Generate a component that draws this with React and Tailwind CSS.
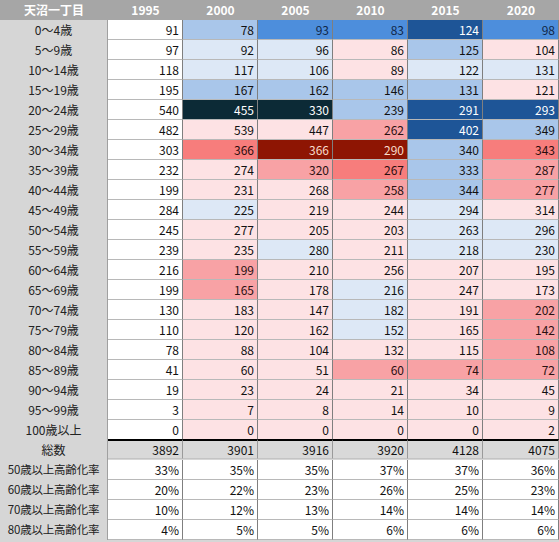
const FONT = { fontFamily: '"Noto Sans CJK JP", "Noto Sans", sans-serif' };

const SWATCH = {
  w: 'bg-white text-[#111]',
  vb: 'bg-[#dde8f6] text-[#111]',
  lb: 'bg-[#a9c6ea] text-[#111]',
  mb: 'bg-[#4d8edc] text-[#10284a]',
  db: 'bg-[#1e5597] text-white',
  nv: 'bg-[#0c2a36] text-white',
  vp: 'bg-[#fde2e4] text-[#111]',
  pk: 'bg-[#f8a2a5] text-[#2a1111]',
  sa: 'bg-[#f77d7c] text-[#2a0d0d]',
  dr: 'bg-[#8e1503] text-[#f9dccb]',
};

const years = ['1995', '2000', '2005', '2010', '2015', '2020'];

// [label, [value, swatch] x6]
const ages = [
  ['0～4歳', [[91, 'w'], [78, 'lb'], [93, 'mb'], [83, 'mb'], [124, 'db'], [98, 'mb']]],
  ['5～9歳', [[97, 'w'], [92, 'vb'], [96, 'vb'], [86, 'vp'], [125, 'lb'], [104, 'vp']]],
  ['10～14歳', [[118, 'w'], [117, 'vb'], [106, 'vb'], [89, 'vp'], [122, 'vb'], [131, 'vb']]],
  ['15～19歳', [[195, 'w'], [167, 'lb'], [162, 'lb'], [146, 'lb'], [131, 'lb'], [121, 'vp']]],
  ['20～24歳', [[540, 'w'], [455, 'nv'], [330, 'nv'], [239, 'lb'], [291, 'db'], [293, 'db']]],
  ['25～29歳', [[482, 'w'], [539, 'vp'], [447, 'vp'], [262, 'pk'], [402, 'db'], [349, 'lb']]],
  ['30～34歳', [[303, 'w'], [366, 'sa'], [366, 'dr'], [290, 'dr'], [340, 'lb'], [343, 'sa']]],
  ['35～39歳', [[232, 'w'], [274, 'vp'], [320, 'pk'], [267, 'sa'], [333, 'lb'], [287, 'pk']]],
  ['40～44歳', [[199, 'w'], [231, 'vp'], [268, 'vp'], [258, 'pk'], [344, 'lb'], [277, 'pk']]],
  ['45～49歳', [[284, 'w'], [225, 'vb'], [219, 'vp'], [244, 'vp'], [294, 'vb'], [314, 'vp']]],
  ['50～54歳', [[245, 'w'], [277, 'vp'], [205, 'vp'], [203, 'vp'], [263, 'vb'], [296, 'vb']]],
  ['55～59歳', [[239, 'w'], [235, 'vp'], [280, 'vb'], [211, 'vp'], [218, 'vb'], [230, 'vb']]],
  ['60～64歳', [[216, 'w'], [199, 'pk'], [210, 'vp'], [256, 'vp'], [207, 'vp'], [195, 'vp']]],
  ['65～69歳', [[199, 'w'], [165, 'pk'], [178, 'vp'], [216, 'vb'], [247, 'vp'], [173, 'vp']]],
  ['70～74歳', [[130, 'w'], [183, 'vp'], [147, 'vp'], [182, 'vb'], [191, 'vp'], [202, 'pk']]],
  ['75～79歳', [[110, 'w'], [120, 'vp'], [162, 'vp'], [152, 'vb'], [165, 'vp'], [142, 'pk']]],
  ['80～84歳', [[78, 'w'], [88, 'vp'], [104, 'vp'], [132, 'vp'], [115, 'vp'], [108, 'pk']]],
  ['85～89歳', [[41, 'w'], [60, 'vp'], [51, 'vp'], [60, 'pk'], [74, 'pk'], [72, 'pk']]],
  ['90～94歳', [[19, 'w'], [23, 'vp'], [24, 'vp'], [21, 'vp'], [34, 'vp'], [45, 'vp']]],
  ['95～99歳', [[3, 'w'], [7, 'vp'], [8, 'vp'], [14, 'vp'], [10, 'vp'], [9, 'vp']]],
  ['100歳以上', [[0, 'w'], [0, 'vp'], [0, 'vp'], [0, 'vp'], [0, 'vp'], [2, 'vp']]],
];

const totals = [3892, 3901, 3916, 3920, 4128, 4075];

const rates = [
  ['50歳以上高齢化率', ['33%', '35%', '35%', '37%', '37%', '36%']],
  ['60歳以上高齢化率', ['20%', '22%', '23%', '26%', '25%', '23%']],
  ['70歳以上高齢化率', ['10%', '12%', '13%', '14%', '14%', '14%']],
  ['80歳以上高齢化率', ['4%', '5%', '5%', '6%', '6%', '6%']],
];

const Label = ({ children, className = '' }) => (
  <div className={`h-[20px] bg-[#d6d6d6] text-[#222] flex items-center justify-center whitespace-nowrap border-r border-[#a0a0a0] ${className}`}>
    {children}
  </div>
);

const Cell = ({ children, className = '' }) => (
  <div className={`h-[20px] flex items-center justify-end pr-[3px] border-r border-b border-r-[#7f7f7f] border-b-[#b8b8b8] ${className}`}>
    {children}
  </div>
);

export default function App() {
  return (
    <div className="w-[559px] h-[542px] bg-[#d6d6d6] overflow-hidden" style={FONT}>
      <div className="grid grid-cols-[108px_75px_75px_75px_75px_75px_76px] text-[12px] leading-none">
        {/* header */}
        <div className="h-[20px] bg-[#a6a6a6] text-white font-bold flex items-center justify-center">天沼一丁目</div>
        {years.map((y) => (
          <div key={y} className="h-[20px] bg-[#a6a6a6] text-white font-bold flex items-center justify-center">
            {y}
          </div>
        ))}

        {/* age rows */}
        {ages.map(([label, cells]) => (
          <div key={label} className="contents">
            <Label>{label}</Label>
            {cells.map(([v, s], i) => (
              <Cell key={i} className={SWATCH[s]}>{v}</Cell>
            ))}
          </div>
        ))}

        {/* total */}
        <Label>総数</Label>
        {totals.map((t, i) => (
          <div key={i} className="h-[20px] bg-[#d9d9d9] text-[#111] flex items-center justify-end pr-[3px] border-t-2 border-t-black border-r border-r-[#9a9a9a] border-b border-b-[#c4c4c4] -mt-[1px]">
            {t}
          </div>
        ))}

        {/* rates */}
        {rates.map(([label, vals]) => (
          <div key={label} className="contents">
            <Label className="text-[11.5px] tracking-[-0.2px]">{label}</Label>
            {vals.map((v, i) => (
              <Cell key={i} className="bg-white text-[#111]">{v}</Cell>
            ))}
          </div>
        ))}
      </div>
    </div>
  );
}
